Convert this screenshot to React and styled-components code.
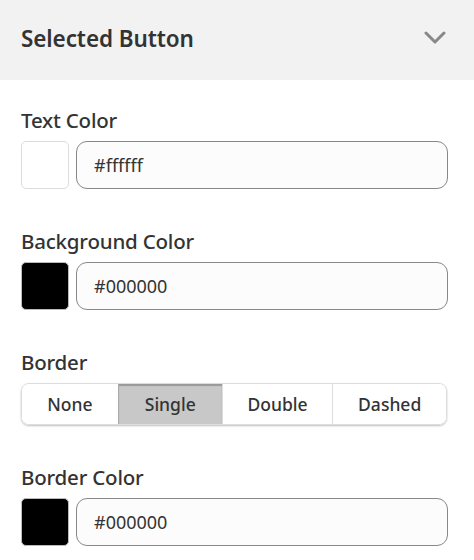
import React, { useState } from 'react';
import styled, { createGlobalStyle } from 'styled-components';

const Global = createGlobalStyle`
  body {
    margin: 0;
    background: #fff;
    font-family: "Noto Sans", "Open Sans", sans-serif;
    color: #333;
  }
`;

const Panel = styled.div`
  width: 474px;
  background: #fff;
`;

const Header = styled.div`
  height: 80px;
  background: #f2f2f2;
  display: flex;
  align-items: center;
  justify-content: space-between;
  padding: 0 28px 4px 21px;
  box-sizing: border-box;
`;

const Title = styled.h2`
  margin: 0;
  font-size: 22.5px;
  font-weight: 600;
  color: #333;
  letter-spacing: -0.1px;
`;

const Body = styled.div`
  padding: 27px 26px 0 21px;
  display: flex;
  flex-direction: column;
  gap: 39px;
`;

const Field = styled.div`
  display: flex;
  flex-direction: column;
  gap: 8px;
`;

const Label = styled.label`
  font-size: 20.5px;
  line-height: 26px;
  font-weight: 500;
  color: #333;
  letter-spacing: -0.2px;
`;

const Row = styled.div`
  display: flex;
  gap: 7px;
`;

const Swatch = styled.div`
  width: 48px;
  height: 48px;
  box-sizing: border-box;
  border-radius: 5px;
  border: 1px solid ${({ color }) => (color === '#ffffff' ? '#dcdcdc' : '#bbb')};
  background: ${({ color }) => color};
  flex: none;
`;

const Input = styled.input`
  flex: 1;
  height: 48px;
  box-sizing: border-box;
  border: 1px solid #888;
  border-radius: 11px;
  background: #fcfcfc;
  padding: 0 17px;
  font-family: inherit;
  font-size: 18px;
  color: #333;
  outline: none;
`;

const Segments = styled.div`
  display: flex;
  height: 42px;
  box-sizing: border-box;
  border: 1px solid #ddd;
  border-radius: 8px;
  overflow: hidden;
  box-shadow: 0 1px 2px rgba(0, 0, 0, 0.25);
  margin-right: 1px;
`;

const Segment = styled.button`
  flex: ${({ grow }) => grow};
  border: none;
  border-left: 1px solid ${({ active }) => (active ? '#aaa' : '#ddd')};
  &:first-child { border-left: none; }
  background: ${({ active }) => (active ? '#c8c8c8' : '#fff')};
  box-shadow: ${({ active }) => (active ? 'inset 0 2px 1px #999' : 'none')};
  font-family: inherit;
  font-size: 17.5px;
  font-weight: 500;
  color: #333;
  cursor: pointer;
  padding: 0;
`;

const Chevron = () => (
  <svg width="22" height="14" viewBox="0 0 22 14" fill="none">
    <path d="M2 2l9 9 9-9" stroke="#888" strokeWidth="3" strokeLinecap="round" strokeLinejoin="round" />
  </svg>
);

function ColorField({ label, value }) {
  return (
    <Field>
      <Label>{label}</Label>
      <Row>
        <Swatch color={value} />
        <Input defaultValue={value} />
      </Row>
    </Field>
  );
}

export default function App() {
  const [border, setBorder] = useState('Single');
  const options = [
    ['None', 97],
    ['Single', 104],
    ['Double', 111],
    ['Dashed', 114],
  ];
  return (
    <Panel>
      <Global />
      <Header>
        <Title>Selected Button</Title>
        <Chevron />
      </Header>
      <Body>
        <ColorField label="Text Color" value="#ffffff" />
        <ColorField label="Background Color" value="#000000" />
        <Field>
          <Label>Border</Label>
          <Segments>
            {options.map(([o, w]) => (
              <Segment key={o} grow={w} active={border === o} onClick={() => setBorder(o)}>
                {o}
              </Segment>
            ))}
          </Segments>
        </Field>
        <ColorField label="Border Color" value="#000000" />
      </Body>
    </Panel>
  );
}
